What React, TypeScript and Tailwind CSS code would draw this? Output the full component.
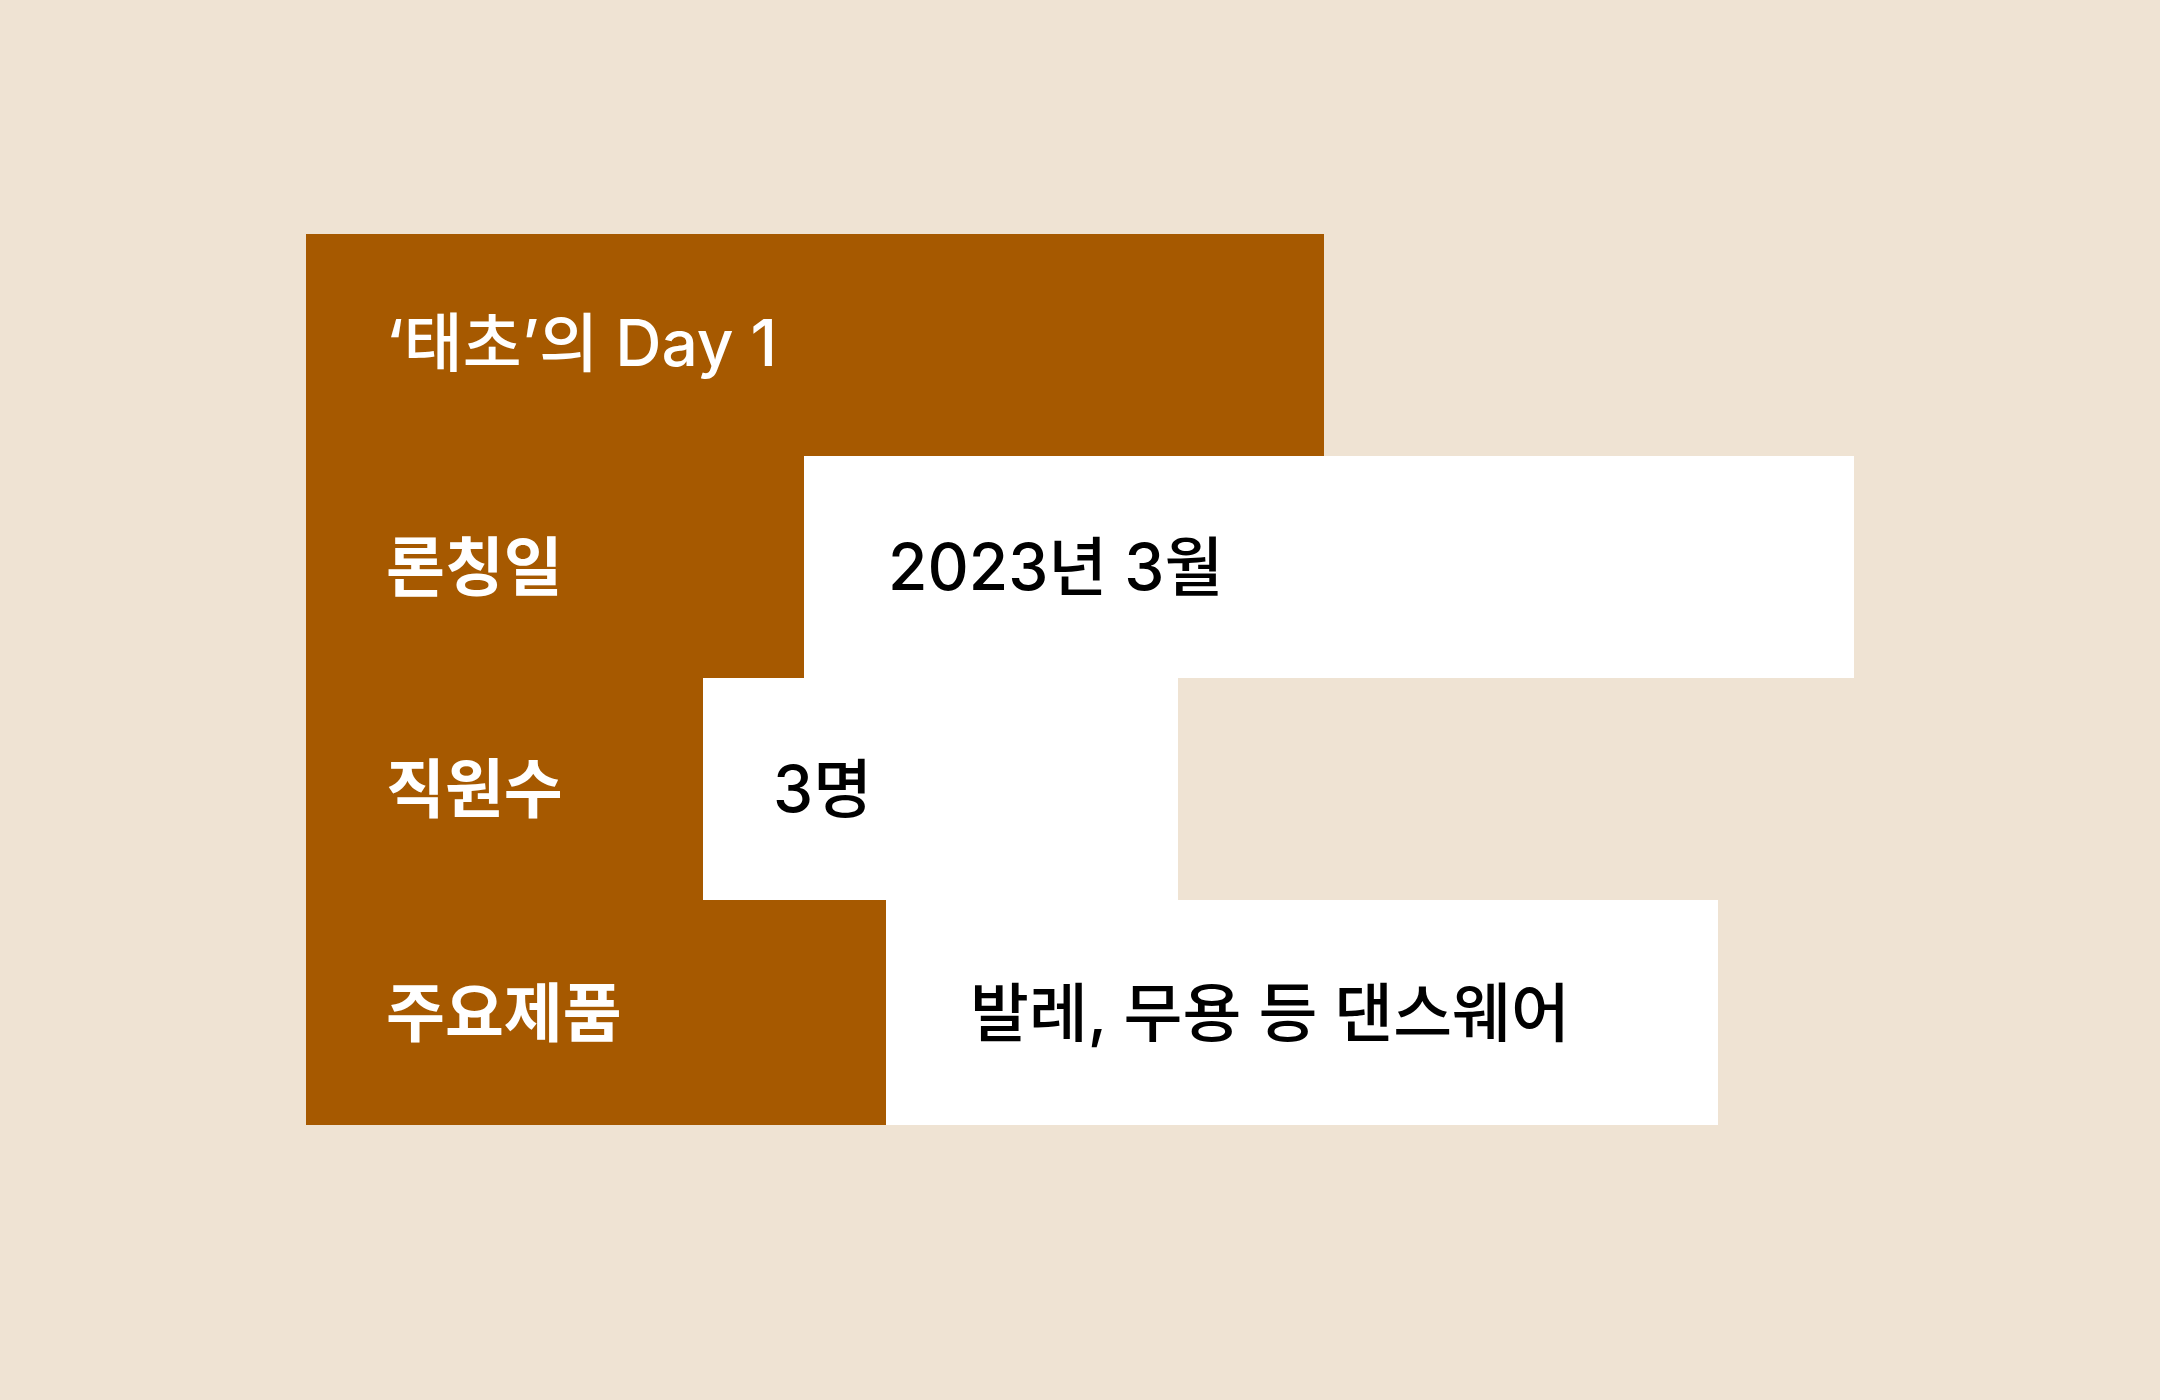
const rows = [
  { label: "론칭일", value: "2023년 3월", labelW: "w-[498px]", boxW: "w-[1050px]", pad: "pl-[84px]", h: "h-[222px]" },
  { label: "직원수", value: "3명", labelW: "w-[397px]", boxW: "w-[475px]", pad: "pl-[70px]", h: "h-[222px]" },
  { label: "주요제품", value: "발레, 무용 등 댄스웨어", labelW: "w-[580px]", boxW: "w-[832px]", pad: "pl-[84px]", h: "h-[225px]" },
];

export default function App() {
  return (
    <main
      className="min-h-screen bg-[#efe3d3] pt-[234px] pl-[306px]"
      style={{ fontFamily: 'Inter, "Noto Sans CJK KR", "Noto Sans", sans-serif' }}
    >
      <section className="flex flex-col">
        <div className="flex h-[222px] w-[1018px] items-center bg-[#a65900] pb-[4px] pl-[80px] text-[64px] font-medium text-white">
          ‘태초’의 Day 1
        </div>
        {rows.map((row) => (
          <div className={`flex ${row.h}`} key={row.label}>
            <div
              className={`flex items-center bg-[#a65900] pl-[80px] text-[64px] font-bold text-white ${row.labelW}`}
            >
              {row.label}
            </div>
            <div
              className={`flex items-center bg-white text-[64px] font-medium text-black ${row.boxW} ${row.pad}`}
            >
              {row.value}
            </div>
          </div>
        ))}
      </section>
    </main>
  );
}
